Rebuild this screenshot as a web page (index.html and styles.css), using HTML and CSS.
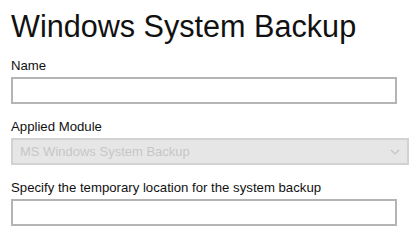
FILE: index.html
```html
<!DOCTYPE html>
<html lang="en">
<head>
<meta charset="UTF-8">
<meta name="viewport" content="width=device-width, initial-scale=1.0">
<title>Windows System Backup</title>
<link rel="stylesheet" href="styles.css">
</head>
<body>
<div class="container">
    <h1>Windows System Backup</h1>

    <div class="field">
        <label for="name">Name</label>
        <input type="text" id="name" name="name" class="text-input">
    </div>

    <div class="field">
        <label for="module">Applied Module</label>
        <div class="select-wrap">
            <select id="module" name="module" disabled>
                <option>MS Windows System Backup</option>
            </select>
            <svg class="chevron" width="10" height="6" viewBox="0 0 10 6">
                <path d="M1 1 L5 5 L9 1" fill="none" stroke="#c4c4c4" stroke-width="1.2"/>
            </svg>
        </div>
    </div>

    <div class="field">
        <label for="location">Specify the temporary location for the system backup</label>
        <input type="text" id="location" name="location" class="text-input">
    </div>
</div>
</body>
</html>
```

FILE: styles.css
```css
body {
    font-family: "Liberation Sans", Arial, sans-serif;
    margin: 0;
    padding: 0;
    background-color: #fff;
    color: #111;
}

.container {
    padding: 8px 11px 0 11px;
}

h1 {
    font-size: 30.6px;
    font-weight: normal;
    line-height: 36px;
    margin: 0 0 14px 0;
}

.field {
    display: flex;
    flex-direction: column;
    margin-bottom: 15px;
}

label {
    font-size: 13.2px;
    line-height: 16px;
    margin-bottom: 3px;
}

.text-input {
    box-sizing: border-box;
    width: 386px;
    height: 27px;
    margin: 0;
    border: 2px solid #b4b4b4;
    background: #fff;
    padding: 0 6px;
    outline: none;
}

.select-wrap {
    position: relative;
    width: 398px;
}

select {
    box-sizing: border-box;
    width: 100%;
    height: 27px;
    margin: 0;
    appearance: none;
    -webkit-appearance: none;
    border: 2px solid #d2d2d2;
    border-radius: 0;
    background: #e6e6e6;
    color: #c6c6c6;
    font-family: "Liberation Sans", Arial, sans-serif;
    font-size: 13px;
    padding: 0 7px;
    opacity: 1;
}

.chevron {
    position: absolute;
    right: 9px;
    top: 11px;
}
```
